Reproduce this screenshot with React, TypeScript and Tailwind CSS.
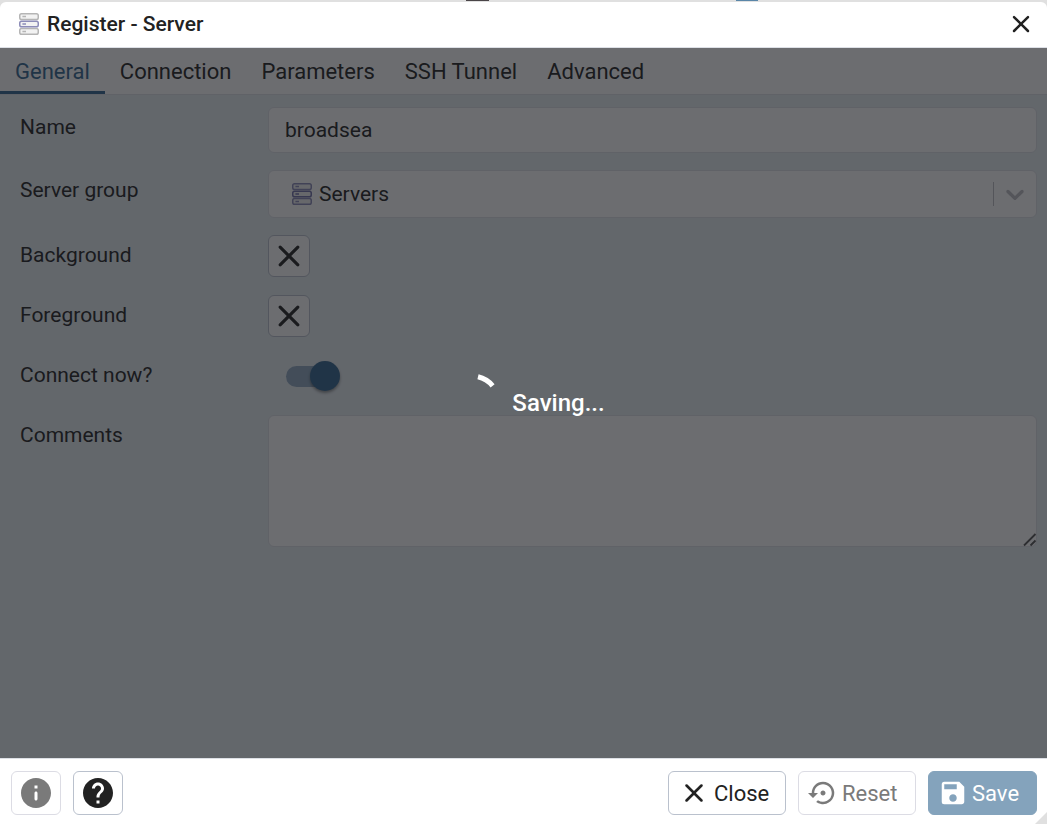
import React from "react";
import { MdSave, MdSettingsBackupRestore } from "react-icons/md";

function CloseIcon({ className }: { className: string }) {
  return (
    <svg viewBox="0 0 24 24" fill="currentColor" className={className} aria-hidden="true">
      <path d="M18.3 5.71a.9959.9959 0 0 0-1.41 0L12 10.59 7.11 5.7a.9959.9959 0 0 0-1.41 0c-.39.39-.39 1.02 0 1.41L10.59 12 5.7 16.89c-.39.39-.39 1.02 0 1.41.39.39 1.02.39 1.41 0L12 13.41l4.89 4.89c.39.39 1.02.39 1.41 0 .39-.39.39-1.02 0-1.41L13.41 12l4.89-4.89c.38-.38.38-1.02 0-1.4z" />
    </svg>
  );
}

function InfoIcon() {
  return (
    <svg viewBox="0 0 24 24" fill="currentColor" className="size-9" aria-hidden="true">
      <path d="M12 2C6.48 2 2 6.48 2 12s4.48 10 10 10 10-4.48 10-10S17.52 2 12 2zm0 15c-.55 0-1-.45-1-1v-4c0-.55.45-1 1-1s1 .45 1 1v4c0 .55-.45 1-1 1zm1-8h-2V7h2v2z" />
    </svg>
  );
}

function HelpIcon() {
  return (
    <svg viewBox="0 0 24 24" fill="currentColor" className="size-9" aria-hidden="true">
      <path d="M12 2C6.48 2 2 6.48 2 12s4.48 10 10 10 10-4.48 10-10S17.52 2 12 2zm1 17h-2v-2h2v2zm2.07-7.75-.9.92C13.45 12.9 13 13.5 13 15h-2v-.5c0-1.1.45-2.1 1.17-2.83l1.24-1.26c.37-.36.59-.86.59-1.41 0-1.1-.9-2-2-2s-2 .9-2 2H8c0-2.21 1.79-4 4-4s4 1.79 4 4c0 .88-.36 1.68-.93 2.25z" />
    </svg>
  );
}

function ServersIcon({ outer, middle }: { outer: string; middle: string }) {
  return (
    <svg viewBox="0 0 20 22" className="h-[22px] w-5" fill="#f2f2f2" strokeWidth="1.5" aria-hidden="true">
      <g stroke={outer}>
        <rect x="0.75" y="0.75" width="18.5" height="5.7" rx="1.8" />
        <path d="M3.4 3.6h3.6" />
        <rect x="0.75" y="15.55" width="18.5" height="5.7" rx="1.8" />
        <path d="M3.4 18.4h3.6" />
      </g>
      <g stroke={middle}>
        <rect x="0.75" y="8.15" width="18.5" height="5.7" rx="1.8" />
        <path d="M3.4 11h3.6" />
      </g>
    </svg>
  );
}

const tabs = ["General", "Connection", "Parameters", "SSH Tunnel", "Advanced"];

function Row({ label, htmlFor, children }: { label: string; htmlFor: string; children: React.ReactNode }) {
  return (
    <div className="grid min-h-[43px] grid-cols-[248px_minmax(0,1fr)] items-start">
      <label htmlFor={htmlFor} className="leading-10">
        {label}
      </label>
      {children}
    </div>
  );
}

const field = "w-full rounded-md border border-[#dde0e6] bg-white text-[#222222] outline-none";
const colorButton =
  "flex size-[42px] items-center justify-center rounded-md border border-[#bac1cd] bg-white text-[#222222]";
const iconButton = "flex h-11 w-[50px] items-center justify-center rounded-md border";
const textButton = "flex h-11 items-center gap-1 rounded-md border pl-[9px] text-[22px]";

export default function App() {
  return (
    <div className="flex min-h-screen flex-col bg-[#e0e0e0] font-[Roboto,sans-serif] text-[21px] text-[#222222]">
      <div className="grid h-[2px] grid-cols-[466fr_23fr_247fr_22fr_289fr]" aria-hidden="true">
        <span />
        <span className="h-px bg-[#4a4548]" />
        <span />
        <span className="h-px bg-[#5a86a8]" />
        <span />
      </div>

      <div role="dialog" aria-labelledby="dialog-title" className="relative flex flex-1 flex-col overflow-hidden rounded-t-md bg-white">
        <header className="flex h-[46px] items-center gap-2 border-b border-[#dde0e6] pr-[11px] pb-0.5 pl-[19px]">
          <ServersIcon outer="#b5b5b5" middle="#8c8cb8" />
          <h1 id="dialog-title" className="flex-1 text-[21px] leading-6 font-medium">
            Register - Server
          </h1>
          <button type="button" aria-label="Close dialog">
            <CloseIcon className="size-[30px]" />
          </button>
        </header>

        <main className="relative flex flex-1 flex-col bg-[#e7eef2]">
          <div role="tablist" className="flex h-[47px] border-b border-[#dde0e6] bg-white text-[22px]">
            {tabs.map((tab, i) => (
              <button
                key={tab}
                type="button"
                role="tab"
                aria-selected={i === 0}
                className={
                  i === 0
                    ? "border-b-3 border-[#326690] px-[15px] pt-[3px] text-[#326690]"
                    : "border-b-3 border-transparent px-[15px] pt-[3px]"
                }
              >
                {tab}
              </button>
            ))}
          </div>

          <form className="flex flex-col gap-[17px] pt-3 pr-[10px] pb-5 pl-5">
            <Row label="Name" htmlFor="name">
              <input id="name" type="text" defaultValue="broadsea" className={field + " h-[46px] px-4"} />
            </Row>
            <Row label="Server group" htmlFor="group">
              <div className="relative">
                <select id="group" className={field + " h-12 appearance-none pt-0.5 pr-12 pl-[50px]"}>
                  <option>Servers</option>
                </select>
                <span className="pointer-events-none absolute inset-y-0 left-6 flex items-center">
                  <ServersIcon outer="#8c8cb8" middle="#6f6fa8" />
                </span>
                <span className="pointer-events-none absolute inset-y-0 right-[7px] flex items-center gap-[6px] text-[#bfbfc4]">
                  <span className="h-6 w-px bg-[#bfbfc4]" />
                  <svg viewBox="0 0 20 20" className="size-[30px]" fill="currentColor" aria-hidden="true">
                    <path d="M4.516 7.548c0.436-0.446 1.043-0.481 1.576 0l3.908 3.747 3.908-3.747c0.533-0.481 1.141-0.446 1.574 0 0.436 0.445 0.408 1.197 0 1.615-0.406 0.418-4.695 4.502-4.695 4.502-0.217 0.223-0.502 0.335-0.787 0.335s-0.57-0.112-0.789-0.335c0 0-4.287-4.084-4.695-4.502s-0.436-1.17 0-1.615z" />
                  </svg>
                </span>
              </div>
            </Row>
            <Row label="Background" htmlFor="background">
              <button id="background" type="button" className={colorButton}>
                <CloseIcon className="size-[38px]" />
              </button>
            </Row>
            <Row label="Foreground" htmlFor="foreground">
              <button id="foreground" type="button" className={colorButton}>
                <CloseIcon className="size-[38px]" />
              </button>
            </Row>
            <Row label="Connect now?" htmlFor="connect">
              <div className="flex h-[42px] items-center pl-[18px]">
                <span className="relative flex h-[30px] w-[54px] items-center">
                  <span className="h-[21px] w-[51px] rounded-full bg-[#8fa9c1]" />
                  <input
                    id="connect"
                    type="checkbox"
                    role="switch"
                    defaultChecked
                    className="absolute right-0 size-[30px] appearance-none rounded-full bg-[#326690] shadow-[0_2px_3px_rgba(0,0,0,0.4)]"
                  />
                </span>
              </div>
            </Row>
            <Row label="Comments" htmlFor="comments">
              <div className="relative">
                <textarea id="comments" className={field + " block h-[132px] resize-none px-4 py-2"} />
                <svg
                  viewBox="0 0 14 14"
                  className="pointer-events-none absolute right-0 bottom-0 size-[14px]"
                  fill="none"
                  stroke="#555555"
                  strokeWidth="1.8"
                  aria-hidden="true"
                >
                  <path d="M1 12.5 12.5 1M7.5 12.5l5-5" />
                </svg>
              </div>
            </Row>
          </form>

          <div
            role="status"
            className="absolute inset-0 flex items-center justify-center gap-[10px] bg-[rgba(22,24,28,0.63)] text-2xl font-medium text-white"
          >
            <svg viewBox="0 0 60 60" className="size-[60px]" fill="none" stroke="white" strokeWidth="5.2" aria-hidden="true">
              <path d="M36 3.8A27 27 0 0 1 50.6 12.8" />
            </svg>
            <span>Saving...</span>
          </div>
        </main>

        <footer className="flex items-center justify-between border-t border-[#dde0e6] pt-3 pr-[10px] pb-[9px] pl-[11px]">
          <div className="flex gap-3">
            <button type="button" disabled aria-label="Information" className={iconButton + " border-[#dcdce4] text-[#7a7a7a]"}>
              <InfoIcon />
            </button>
            <button type="button" aria-label="Help" className={iconButton + " border-[#bac1cd]"}>
              <HelpIcon />
            </button>
          </div>
          <div className="flex gap-3">
            <button type="button" className={textButton + " w-[118px] border-[#bac1cd]"}>
              <CloseIcon className="size-8" />
              Close
            </button>
            <button type="button" disabled className={textButton + " w-[118px] border-[#dcdce4] text-[#7a7a7a]"}>
              <MdSettingsBackupRestore className="size-[30px]" aria-hidden="true" />
              Reset
            </button>
            <button type="button" disabled className={textButton + " w-[109px] border-[#84a3bc] bg-[#84a3bc] text-white"}>
              <MdSave className="size-[30px]" aria-hidden="true" />
              Save
            </button>
          </div>
        </footer>
        <svg viewBox="0 0 12 12" className="pointer-events-none absolute right-0 bottom-0 size-3" fill="#e0e0e0" aria-hidden="true">
          <path d="M12 0v12H0z" />
        </svg>
      </div>
    </div>
  );
}
